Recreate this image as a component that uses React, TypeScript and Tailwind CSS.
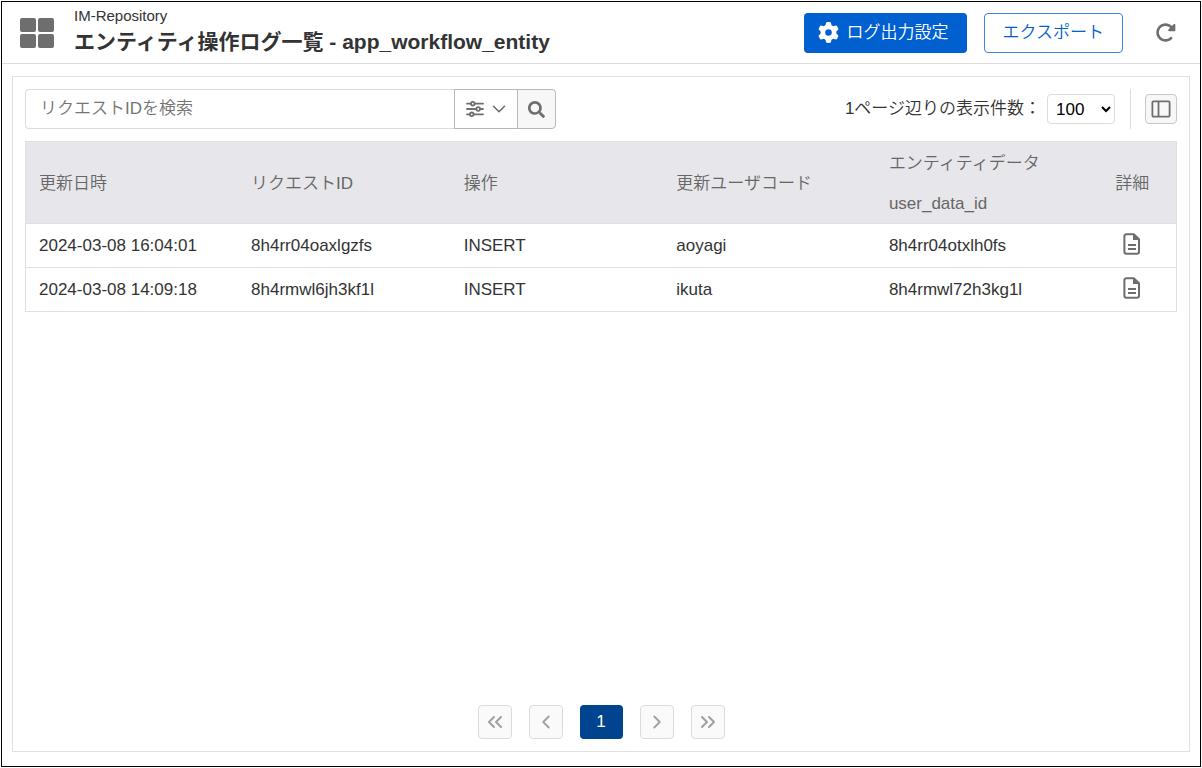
import type { ReactNode } from 'react';
import { ChevronDown, ChevronLeft, ChevronRight, ChevronsLeft, ChevronsRight } from 'lucide-react';
import { FaSearch } from 'react-icons/fa';
import { FaGear, FaRotateRight } from 'react-icons/fa6';

type LogEntry = {
  updatedAt: string;
  requestId: string;
  operation: string;
  userCode: string;
  userDataId: string;
};

const logs: LogEntry[] = [
  {
    updatedAt: '2024-03-08 16:04:01',
    requestId: '8h4rr04oaxlgzfs',
    operation: 'INSERT',
    userCode: 'aoyagi',
    userDataId: '8h4rr04otxlh0fs',
  },
  {
    updatedAt: '2024-03-08 14:09:18',
    requestId: '8h4rmwl6jh3kf1l',
    operation: 'INSERT',
    userCode: 'ikuta',
    userDataId: '8h4rmwl72h3kg1l',
  },
];

function AppIcon() {
  return (
    <svg viewBox="0 0 34 30" className="w-[34px] h-[30px] fill-[#6e6e6e]" aria-hidden="true">
      <rect x="0" y="0" width="16" height="14" rx="2" />
      <rect x="18" y="0" width="16" height="14" rx="2" />
      <rect x="0" y="16" width="16" height="14" rx="2" />
      <rect x="18" y="16" width="16" height="14" rx="2" />
    </svg>
  );
}

function SlidersIcon() {
  return (
    <svg viewBox="0 0 18 16" className="w-[18px] h-4" fill="none" stroke="currentColor" strokeWidth="1.8" strokeLinecap="round" aria-hidden="true">
      <path d="M1 2.7h3.6M9 2.7h8M1 8h9M14.4 8H17M1 13.3h2.6M8 13.3h9" />
      <circle cx="6.8" cy="2.7" r="1.8" />
      <circle cx="12.2" cy="8" r="1.8" />
      <circle cx="5.8" cy="13.3" r="1.8" />
    </svg>
  );
}

function DocumentIcon() {
  return (
    <svg viewBox="0 0 18 22" className="w-[18px] h-[22px]" fill="none" stroke="currentColor" strokeWidth="2" aria-hidden="true">
      <path d="M3.4 1.2h7.4L16 6.2v12.6a2 2 0 0 1-2 2H3.4a2 2 0 0 1-2-2V3.2a2 2 0 0 1 2-2z" strokeLinejoin="round" />
      <path d="M10 1v6h6z" fill="currentColor" stroke="none" />
      <path d="M5 12h8M5 16h8" strokeWidth="1.8" />
    </svg>
  );
}

function ColumnsIcon() {
  return (
    <svg viewBox="0 0 20 18" className="w-5 h-[18px]" fill="none" stroke="currentColor" strokeWidth="1.8" aria-hidden="true">
      <rect x="1.4" y="1.4" width="17.2" height="15.2" rx="1" />
      <path d="M7.5 1.4v15.2" />
    </svg>
  );
}

function PageButton({ label, children }: { label: string; children: ReactNode }) {
  return (
    <button
      type="button"
      aria-label={label}
      disabled
      className="flex size-[34px] items-center justify-center rounded border border-[#dcdcdc] bg-[#fafafa] text-[#a0a0a0]"
    >
      {children}
    </button>
  );
}

export default function App() {
  return (
    <div className="min-h-screen bg-white p-px flex font-['Liberation_Sans','Noto_Sans_CJK_JP',sans-serif] text-[17px] text-[#333]">
      <div className="flex flex-1 flex-col border border-black">
        <header className="flex h-[62px] items-center border-b border-[#dcdcdc] pl-[18px] pr-6">
          <AppIcon />
          <div className="ml-5 flex-1">
            <p className="text-[15px] leading-[18px]">IM-Repository</p>
            <h1 className="pt-px text-[21px] font-bold leading-8">エンティティ操作ログ一覧 - app_workflow_entity</h1>
          </div>
          <button type="button" className="flex h-10 items-center gap-2 rounded bg-[#0060d0] pl-[14px] pr-[18px] font-[350] text-white">
            <FaGear className="size-[21px]" />
            ログ出力設定
          </button>
          <button type="button" className="ml-[17px] h-10 rounded border border-[#3d84dc] px-[18px] font-[350] text-[#0060d0]">
            エクスポート
          </button>
          <button type="button" aria-label="再読み込み" className="ml-8 text-[#6e6e6e]">
            <FaRotateRight className="size-[21px]" />
          </button>
        </header>

        <main className="m-3 mx-[10px] mb-[14px] flex flex-1 flex-col border border-[#e0e0e0] p-3">
          <div className="flex items-center">
            <div className="flex h-10">
              <input
                type="text"
                aria-label="リクエストIDを検索"
                placeholder="リクエストIDを検索"
                className="w-[429px] rounded-l border border-r-0 border-[#dcdcdc] px-[14px] font-[350] placeholder:text-[#757575]"
              />
              <button type="button" aria-label="検索条件" className="flex w-[63px] items-center justify-center gap-1 border border-r-0 border-[#b8b8b8] pl-1 text-[#6e6e6e]">
                <SlidersIcon />
                <ChevronDown className="size-[22px]" strokeWidth={1.75} />
              </button>
              <button type="button" aria-label="検索" className="flex w-[39px] items-center justify-center rounded-r border border-[#b8b8b8] bg-[#f7f7f7] text-[#6e6e6e]">
                <FaSearch className="size-[17px]" />
              </button>
            </div>
            <div className="ml-auto flex items-center">
              <label htmlFor="page-size" className="mr-1.5 font-[350]">1ページ辺りの表示件数：</label>
              <select id="page-size" defaultValue="100" className="h-[30px] w-[68px] rounded border border-[#dcdcdc] bg-white pl-1 text-black">
                <option>50</option>
                <option>100</option>
              </select>
              <div className="ml-[15px] mr-[14px] h-10 border-l border-[#dcdcdc]" />
              <button type="button" aria-label="列の表示設定" className="flex h-[30px] w-8 items-center justify-center rounded border border-[#c8c8c8] bg-[#f7f7f7] text-[#6e6e6e]">
                <ColumnsIcon />
              </button>
            </div>
          </div>

          <table className="mt-3 w-full table-fixed border-collapse border border-[#e0e0e0] text-left">
            <colgroup>
              <col />
              <col />
              <col />
              <col />
              <col />
              <col className="w-[88px]" />
            </colgroup>
            <thead className="bg-[#e7e6eb] text-[#666]">
              <tr className="h-[41px]">
                <th rowSpan={2} className="px-[13px] pt-0.5 font-[350]">更新日時</th>
                <th rowSpan={2} className="px-[13px] pt-0.5 font-[350]">リクエストID</th>
                <th rowSpan={2} className="px-[13px] pt-0.5 font-[350]">操作</th>
                <th rowSpan={2} className="px-[13px] pt-0.5 font-[350]">更新ユーザコード</th>
                <th className="px-[13px] pt-0.5 font-[350]">エンティティデータ</th>
                <th rowSpan={2} className="pt-0.5 text-center font-[350]">詳細</th>
              </tr>
              <tr className="h-[41px]">
                <th className="px-[13px] pt-0.5 font-normal">user_data_id</th>
              </tr>
            </thead>
            <tbody>
              {logs.map((log) => (
                <tr key={log.requestId} className="h-11 border-t border-[#e0e0e0]">
                  <td className="px-[13px]">{log.updatedAt}</td>
                  <td className="px-[13px]">{log.requestId}</td>
                  <td className="px-[13px]">{log.operation}</td>
                  <td className="px-[13px]">{log.userCode}</td>
                  <td className="px-[13px]">{log.userDataId}</td>
                  <td className="pb-1">
                    <button type="button" aria-label="詳細" className="mx-auto block text-[#6e6e6e]">
                      <DocumentIcon />
                    </button>
                  </td>
                </tr>
              ))}
            </tbody>
          </table>

          <nav aria-label="ページ" className="mt-auto flex justify-center gap-[17px]">
            <PageButton label="最初のページ">
              <ChevronsLeft className="size-6" />
            </PageButton>
            <PageButton label="前のページ">
              <ChevronLeft className="size-[22px]" />
            </PageButton>
            <button type="button" aria-current="page" className="h-[34px] w-[43px] rounded bg-[#00438f] text-white">
              1
            </button>
            <PageButton label="次のページ">
              <ChevronRight className="size-[22px]" />
            </PageButton>
            <PageButton label="最後のページ">
              <ChevronsRight className="size-6" />
            </PageButton>
          </nav>
        </main>
      </div>
    </div>
  );
}
